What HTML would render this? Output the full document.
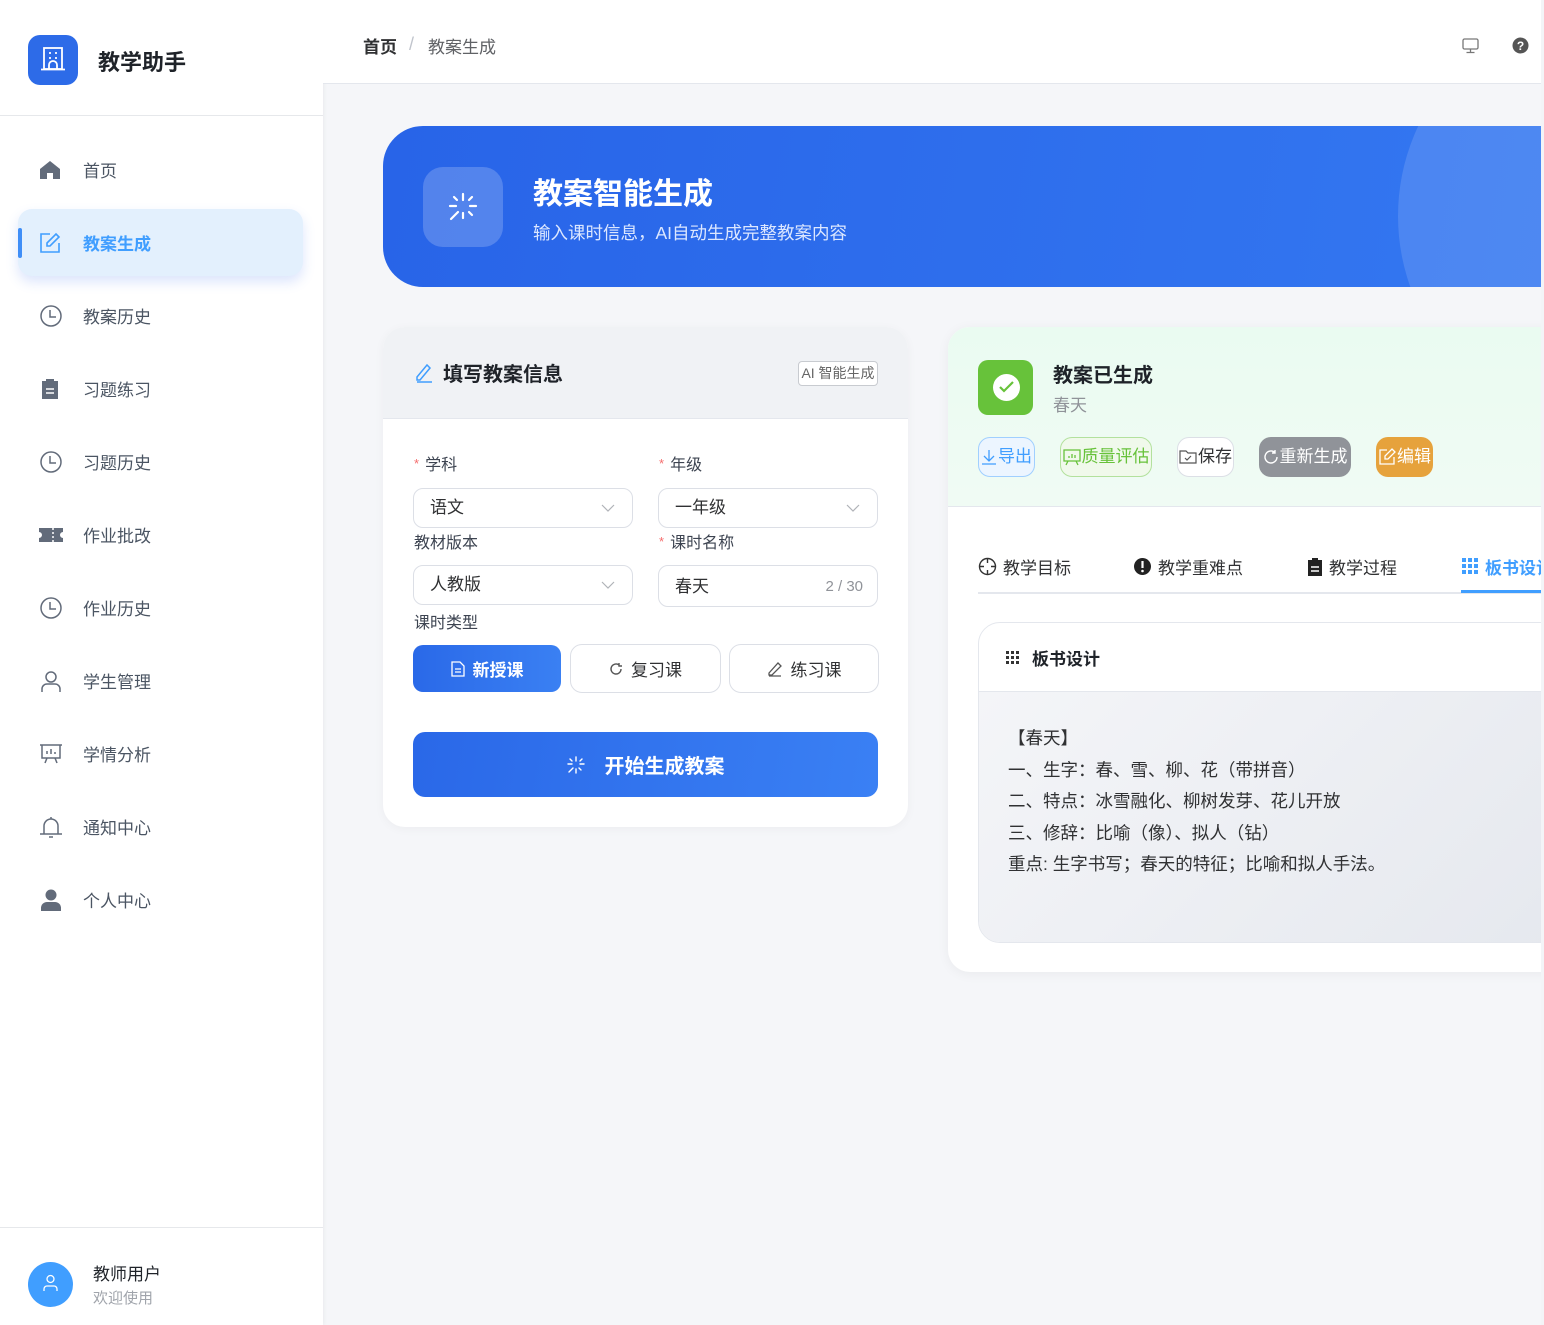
<!DOCTYPE html>
<html><head><meta charset="utf-8">
<style>
*{box-sizing:border-box;margin:0;padding:0}
body{width:1544px;height:1325px;overflow:hidden;background:#f3f4f7;font-family:"Liberation Sans","Noto Sans CJK SC",sans-serif;color:#303133;position:relative}
.abs{position:absolute;white-space:nowrap}
#wrap{position:absolute;left:0;top:0;width:1541px;height:1325px;overflow:hidden;background:#f5f6f9}
.side{position:absolute;left:0;top:0;width:323px;height:1325px;background:#fff;box-shadow:1px 0 4px rgba(0,0,0,.05)}
.nav{position:absolute;left:0;width:323px;height:50px;display:flex;align-items:center;font-size:17px;color:#4b5563}
.nav svg{position:absolute;left:39px}
.nav span{position:absolute;left:83px;top:12px}
.card{position:absolute;background:#fff;border-radius:22px;overflow:hidden}
.sel{position:absolute;height:40px;border:1px solid #dcdfe6;border-radius:10px;background:#fff;font-size:17px;color:#303133;padding-left:16px;line-height:38px}
.lbl{position:absolute;font-size:16px;color:#3d4451;white-space:nowrap}
.lbl b{color:#f56c6c;font-weight:normal;font-size:13px;margin-right:6px;vertical-align:2px}
.btn{position:absolute;top:437px;height:40px;border-radius:12px;font-size:17px;line-height:38px;display:flex;align-items:center;justify-content:center;gap:1px;white-space:nowrap}
.tab{position:absolute;top:554px;font-size:17px;color:#303133;display:flex;align-items:center;gap:6px;white-space:nowrap}
</style></head><body>
<div id="wrap">
<div class="side">
  <div class="abs" style="left:28px;top:35px;width:50px;height:50px;border-radius:12px;background:#2d6be8"></div>
  <svg class="abs" style="left:40px;top:46px" width="26" height="26" viewBox="0 0 26 26" fill="none" stroke="#fff" stroke-width="1.8"><rect x="4" y="2" width="18" height="21"/><path d="M1 23.5h24M9 7h2M15 7h2M9 12h2M15 12h2M9 23v-4a4 4 0 0 1 8 0v4"/></svg>
  <div class="abs" style="left:98px;top:45px;font-size:22px;font-weight:bold;color:#1f2329">教学助手</div>
  <div class="abs" style="left:0;top:115px;width:323px;height:1px;background:#e6e8eb"></div>
  <div class="nav" style="top:145px"><svg width="22" height="20" viewBox="0 0 22 20"><path d="M11 1L1 9v10h7v-6h6v6h7V9z" fill="#626b7a"/></svg><span>首页</span></div>
  <div class="abs" style="left:18px;top:209px;width:285px;height:67px;border-radius:14px;background:#e3f0fd;box-shadow:0 6px 12px rgba(60,110,240,.18)"></div>
  <div class="abs" style="left:18px;top:228px;width:4px;height:30px;background:#3f8ef7;border-radius:2px"></div>
  <div class="nav" style="top:218px;color:#409eff;font-weight:bold"><svg width="22" height="22" viewBox="0 0 22 22" fill="none" stroke="#409eff" stroke-width="1.6"><path d="M11 2H2v18h18v-9"/><path d="M17 2l3 3-9 9H8v-3z"/></svg><span>教案生成</span></div>
  <div class="nav" style="top:291px"><svg width="24" height="24" viewBox="0 0 24 24" fill="none" stroke="#626b7a" stroke-width="1.5"><circle cx="12" cy="12" r="10"/><path d="M11 6v7h6"/></svg><span>教案历史</span></div>
  <div class="nav" style="top:364px"><svg width="22" height="22" viewBox="0 0 22 22"><rect x="3" y="3" width="16" height="18" fill="#626b7a"/><rect x="7" y="1" width="8" height="4" fill="#626b7a"/><path d="M7 11h8M7 15h8" stroke="#fff" stroke-width="1.5"/></svg><span>习题练习</span></div>
  <div class="nav" style="top:437px"><svg width="24" height="24" viewBox="0 0 24 24" fill="none" stroke="#626b7a" stroke-width="1.5"><circle cx="12" cy="12" r="10"/><path d="M11 6v7h6"/></svg><span>习题历史</span></div>
  <div class="nav" style="top:510px"><svg width="24" height="18" viewBox="0 0 24 18"><path d="M0 2h24v4a3 3 0 0 0 0 6v4H0v-4a3 3 0 0 0 0-6z" fill="#626b7a"/><path d="M14 2v14" stroke="#fff" stroke-width="1.5" stroke-dasharray="2 2"/></svg><span>作业批改</span></div>
  <div class="nav" style="top:583px"><svg width="24" height="24" viewBox="0 0 24 24" fill="none" stroke="#626b7a" stroke-width="1.5"><circle cx="12" cy="12" r="10"/><path d="M11 6v7h6"/></svg><span>作业历史</span></div>
  <div class="nav" style="top:656px"><svg width="24" height="24" viewBox="0 0 24 24" fill="none" stroke="#626b7a" stroke-width="1.5"><circle cx="12" cy="8" r="5"/><path d="M3 23v-3a5 5 0 0 1 5-5h8a5 5 0 0 1 5 5v3"/></svg><span>学生管理</span></div>
  <div class="nav" style="top:729px"><svg width="24" height="24" viewBox="0 0 24 24" fill="none" stroke="#626b7a" stroke-width="1.5"><path d="M1 3h22M3 3v13h18V3M8 16l-2 5M16 16l2 5M8 12V9M12 12V7M16 12v-2"/></svg><span>学情分析</span></div>
  <div class="nav" style="top:802px"><svg width="24" height="24" viewBox="0 0 24 24" fill="none" stroke="#626b7a" stroke-width="1.5"><path d="M5 19V11a7 7 0 0 1 14 0v8M1 19h22M12 2v2M10 22h4"/></svg><span>通知中心</span></div>
  <div class="nav" style="top:875px"><svg width="24" height="24" viewBox="0 0 24 24"><circle cx="12" cy="7" r="5.5" fill="#626b7a"/><path d="M2 23v-3a6 6 0 0 1 6-6h8a6 6 0 0 1 6 6v3z" fill="#626b7a"/></svg><span>个人中心</span></div>
  <div class="abs" style="left:0;top:1227px;width:323px;height:1px;background:#e6e8eb"></div>
  <div class="abs" style="left:28px;top:1262px;width:45px;height:45px;border-radius:50%;background:#409eff"></div>
  <svg class="abs" style="left:42px;top:1274px" width="17" height="18" viewBox="0 0 17 18" fill="none" stroke="#fff" stroke-width="1.3"><circle cx="8.5" cy="5" r="3.5"/><path d="M2 17v-2a3 3 0 0 1 3-3h7a3 3 0 0 1 3 3v2"/></svg>
  <div class="abs" style="left:93px;top:1260px;font-size:17px;color:#1f2329">教师用户</div>
  <div class="abs" style="left:93px;top:1287px;font-size:15px;color:#a0a4ab">欢迎使用</div>
</div>
<!-- header -->
<div class="abs" style="left:323px;top:0;width:1220px;height:84px;background:#fff;border-bottom:1px solid #e4e7ed"></div>
<div class="abs" style="left:363px;top:33px;font-size:17px;color:#303133;font-weight:bold">首页</div>
<div class="abs" style="left:409px;top:34px;font-size:18px;color:#c0c4cc">/</div>
<div class="abs" style="left:428px;top:33px;font-size:17px;color:#606266">教案生成</div>
<svg class="abs" style="left:1462px;top:37px" width="17" height="17" viewBox="0 0 17 17" fill="none" stroke="#777" stroke-width="1.3"><rect x="1" y="2" width="15" height="10" rx="1.5"/><path d="M8.5 12v3M4.5 15.5h8"/></svg>
<svg class="abs" style="left:1512px;top:37px" width="17" height="17" viewBox="0 0 17 17"><circle cx="8.5" cy="8.5" r="8" fill="#555"/><text x="8.5" y="13" font-size="12" font-weight="bold" fill="#fff" text-anchor="middle" font-family="Liberation Sans">?</text></svg>
<!-- banner -->
<div class="abs" style="left:383px;top:126px;width:1200px;height:161px;border-radius:40px 0 0 40px;background:linear-gradient(100deg,#2864e8,#3478f1);overflow:hidden">
  <div class="abs" style="left:1015px;top:-120px;width:420px;height:420px;border-radius:50%;background:rgba(255,255,255,.13)"></div>
</div>
<div class="abs" style="left:423px;top:167px;width:80px;height:80px;border-radius:20px;background:rgba(255,255,255,.2)"></div>
<svg class="abs" style="left:447px;top:191px" width="32" height="32" viewBox="0 0 32 32" stroke="#fff" stroke-width="2.2" stroke-linecap="round"><path d="M16 3v6M16 22v5M3 15h6M23 15h6M7 6l3 3M25 6l-3 3M4 28l7-7M22 21l3 3"/></svg>
<div class="abs" style="left:533px;top:169px;font-size:30px;font-weight:bold;color:#fff">教案智能生成</div>
<div class="abs" style="left:533px;top:220px;font-size:17.5px;color:#dce7ff">输入课时信息，AI自动生成完整教案内容</div>
<!-- left card -->
<div class="card" style="left:383px;top:327px;width:525px;height:500px;box-shadow:0 2px 10px rgba(0,0,0,.04)">
  <div class="abs" style="left:0;top:0;width:525px;height:92px;background:#f0f2f5;border-bottom:1px solid #e4e7ed"></div>
</div>
<svg class="abs" style="left:414px;top:363px" width="20" height="20" viewBox="0 0 20 20" fill="none" stroke="#409eff" stroke-width="1.5"><path d="M3 14L13 2l3 3L6 17H3z"/><path d="M3 19h15"/></svg>
<div class="abs" style="left:443px;top:358px;font-size:20px;font-weight:bold;color:#1f2329">填写教案信息</div>
<div class="abs" style="left:798px;top:361px;width:80px;height:25px;border:1px solid #c8cbd0;border-radius:4px;font-size:14px;color:#666;line-height:23px;text-align:center;background:#fff">AI 智能生成</div>
<div class="lbl" style="left:414px;top:451px"><b>*</b>学科</div>
<div class="lbl" style="left:659px;top:451px"><b>*</b>年级</div>
<div class="sel" style="left:413px;top:488px;width:220px">语文</div>
<div class="sel" style="left:658px;top:488px;width:220px">一年级</div>
<div class="lbl" style="left:414px;top:529px">教材版本</div>
<div class="lbl" style="left:659px;top:529px"><b>*</b>课时名称</div>
<div class="sel" style="left:413px;top:565px;width:220px">人教版</div>
<div class="sel" style="left:658px;top:565px;width:220px;height:42px;line-height:42px">春天<span style="position:absolute;right:14px;font-size:15px;color:#909399">2 / 30</span></div>
<svg class="abs" style="left:601px;top:503px" width="14" height="10" viewBox="0 0 14 10" fill="none" stroke="#b0b3b8" stroke-width="1.2"><path d="M1 2l6 6 6-6"/></svg>
<svg class="abs" style="left:846px;top:503px" width="14" height="10" viewBox="0 0 14 10" fill="none" stroke="#b0b3b8" stroke-width="1.2"><path d="M1 2l6 6 6-6"/></svg>
<svg class="abs" style="left:601px;top:580px" width="14" height="10" viewBox="0 0 14 10" fill="none" stroke="#b0b3b8" stroke-width="1.2"><path d="M1 2l6 6 6-6"/></svg>
<div class="lbl" style="left:414px;top:609px">课时类型</div>
<div class="abs" style="left:413px;top:645px;width:148px;height:47px;border-radius:10px;background:linear-gradient(90deg,#2a69e8,#3a80f3);color:#fff;font-size:17px;font-weight:bold;display:flex;align-items:center;justify-content:center;gap:8px"><svg width="14" height="16" viewBox="0 0 14 16" fill="none" stroke="#fff" stroke-width="1.3"><path d="M1 1h8l4 4v10H1z M4 8h6M4 11h6"/></svg>新授课</div>
<div class="abs" style="left:570px;top:644px;width:151px;height:49px;border-radius:12px;border:1px solid #dcdfe6;background:#fff;font-size:17px;color:#303133;display:flex;align-items:center;justify-content:center;gap:8px"><svg width="14" height="14" viewBox="0 0 14 14" fill="none" stroke="#555" stroke-width="1.4"><path d="M12 7a5 5 0 1 1-2-4M10 1v3h3"/></svg>复习课</div>
<div class="abs" style="left:729px;top:644px;width:150px;height:49px;border-radius:12px;border:1px solid #dcdfe6;background:#fff;font-size:17px;color:#303133;display:flex;align-items:center;justify-content:center;gap:8px"><svg width="16" height="16" viewBox="0 0 16 16" fill="none" stroke="#555" stroke-width="1.3"><path d="M2 12L11 2l3 3-9 9H2zM2 15h12"/></svg>练习课</div>
<div class="abs" style="left:413px;top:732px;width:465px;height:65px;border-radius:12px;background:linear-gradient(100deg,#2a68e8,#3a80f4);color:#fff;font-size:20px;font-weight:bold;display:flex;align-items:center;justify-content:center;gap:20px"><svg width="18" height="18" viewBox="0 0 18 18" stroke="#fff" stroke-width="1.4" stroke-linecap="round"><path d="M9 1v4M9 13v4M1 8h4M13 8h4M3 3l2 2M15 3l-2 2M2 16l4-4M12 12l2 2"/></svg>开始生成教案</div>
<!-- right card -->
<div class="card" style="left:948px;top:327px;width:640px;height:645px;box-shadow:0 2px 12px rgba(0,0,0,.05)">
  <div class="abs" style="left:0;top:0;width:640px;height:180px;background:linear-gradient(180deg,#eafbf1,#f0fbf4);border-bottom:1px solid #e4e7ed"></div>
</div>
<div class="abs" style="left:978px;top:360px;width:55px;height:55px;border-radius:10px;background:#67c23a"></div>
<div class="abs" style="left:993px;top:374px;width:27px;height:27px;border-radius:50%;background:#fff"></div>
<svg class="abs" style="left:998px;top:380px" width="17" height="14" viewBox="0 0 17 14" fill="none" stroke="#67c23a" stroke-width="2.2"><path d="M2 7l4 4 9-9"/></svg>
<div class="abs" style="left:1053px;top:359px;font-size:20px;font-weight:bold;color:#1f2329">教案已生成</div>
<div class="abs" style="left:1053px;top:391px;font-size:17px;color:#909399">春天</div>
<div class="btn" style="left:978px;width:57px;background:#ecf5ff;border:1px solid #a0cfff;color:#409eff"><svg width="16" height="16" viewBox="0 0 16 16" fill="none" stroke="#409eff" stroke-width="1.3"><path d="M8 1v10M3 7l5 5 5-5M1 15h14"/></svg>导出</div>
<div class="btn" style="left:1060px;width:92px;background:#f0f9eb;border:1px solid #b3e19d;color:#67c23a"><svg width="18" height="18" viewBox="0 0 18 18" fill="none" stroke="#67c23a" stroke-width="1.3"><path d="M1 2h16v11H1zM5 13l-2 4M13 13l2 4M6 10V8M9 10V6M12 10V7"/></svg>质量评估</div>
<div class="btn" style="left:1177px;width:57px;background:#fff;border:1px solid #dcdfe6;color:#303133"><svg width="18" height="16" viewBox="0 0 18 16" fill="none" stroke="#555" stroke-width="1.2"><path d="M1 2h6l2 2h8v10H1z M6 9l2 2 4-4"/></svg>保存</div>
<div class="btn" style="left:1259px;width:92px;background:#909399;color:#fff"><svg width="16" height="16" viewBox="0 0 16 16" fill="none" stroke="#fff" stroke-width="1.4"><path d="M14 8a6 6 0 1 1-2-4.5M12 1v3h-3"/></svg>重新生成</div>
<div class="btn" style="left:1376px;width:57px;background:#e6a23c;color:#fff"><svg width="18" height="18" viewBox="0 0 18 18" fill="none" stroke="#fff" stroke-width="1.3"><path d="M9 2H2v14h14V9M14 1l3 3-7 7H7V8z"/></svg>编辑</div>
<div class="abs" style="left:978px;top:592px;width:570px;height:2px;background:#e4e7ed"></div>
<div class="abs" style="left:1461px;top:590px;width:90px;height:3px;background:#409eff"></div>
<div class="tab" style="left:978px"><svg width="19" height="19" viewBox="0 0 19 19" fill="none" stroke="#333" stroke-width="1.4"><circle cx="9.5" cy="9.5" r="8"/><path d="M9.5 1v5M9.5 13v5M1 9.5h5M13 9.5h5"/></svg>教学目标</div>
<div class="tab" style="left:1133px"><svg width="19" height="19" viewBox="0 0 19 19"><circle cx="9.5" cy="9.5" r="8.5" fill="#222"/><path d="M9.5 4v7" stroke="#fff" stroke-width="2.2"/><circle cx="9.5" cy="14" r="1.3" fill="#fff"/></svg>教学重难点</div>
<div class="tab" style="left:1307px"><svg width="16" height="18" viewBox="0 0 16 18"><rect x="1" y="2" width="14" height="16" fill="#222"/><rect x="5" y="0" width="6" height="3" fill="#222"/><path d="M4 9h8M4 13h8" stroke="#fff" stroke-width="1.5"/></svg>教学过程</div>
<div class="tab" style="left:1462px;color:#409eff;font-weight:bold"><svg width="17" height="17" viewBox="0 0 17 17" fill="#409eff"><rect x="0" y="0" width="4" height="4"/><rect x="6" y="0" width="4" height="4"/><rect x="12" y="0" width="4" height="4"/><rect x="0" y="6" width="4" height="4"/><rect x="6" y="6" width="4" height="4"/><rect x="12" y="6" width="4" height="4"/><rect x="0" y="12" width="4" height="4"/><rect x="6" y="12" width="4" height="4"/><rect x="12" y="12" width="4" height="4"/></svg>板书设计</div>
<div class="abs" style="left:978px;top:622px;width:600px;height:321px;border:1px solid #e4e7ed;border-radius:22px 0 0 22px;overflow:hidden;background:#fff">
  <div class="abs" style="left:0;top:68px;width:600px;height:253px;background:linear-gradient(135deg,#f4f5f8,#e5e8ee);border-top:1px solid #e4e7ed"></div>
</div>
<svg class="abs" style="left:1006px;top:651px" width="13" height="13" viewBox="0 0 13 13" fill="#333"><rect x="0" y="0" width="3" height="3"/><rect x="5" y="0" width="3" height="3"/><rect x="10" y="0" width="3" height="3"/><rect x="0" y="5" width="3" height="3"/><rect x="5" y="5" width="3" height="3"/><rect x="10" y="5" width="3" height="3"/><rect x="0" y="10" width="3" height="3"/><rect x="5" y="10" width="3" height="3"/><rect x="10" y="10" width="3" height="3"/></svg>
<div class="abs" style="left:1032px;top:645px;font-size:17px;font-weight:bold;color:#1f2329">板书设计</div>
<div class="abs" style="left:1008px;top:723px;font-size:17.5px;color:#303133;line-height:31.5px">【春天】<br>一、生字：春、雪、柳、花（带拼音）<br>二、特点：冰雪融化、柳树发芽、花儿开放<br>三、修辞：比喻（像）、拟人（钻）<br>重点: 生字书写；春天的特征；比喻和拟人手法。</div>
</div>
</body></html>
